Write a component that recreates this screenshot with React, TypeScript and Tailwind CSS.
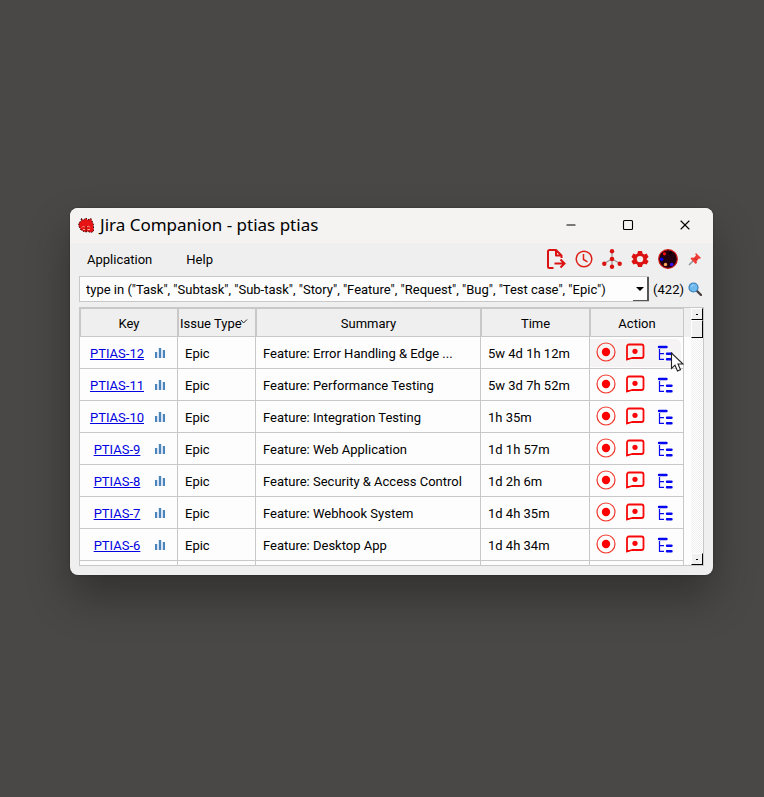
import { Minus, Square, X } from 'lucide-react';

const issues = [
  { key: 'PTIAS-12', type: 'Epic', summary: 'Feature: Error Handling & Edge ...', time: '5w 4d 1h 12m' },
  { key: 'PTIAS-11', type: 'Epic', summary: 'Feature: Performance Testing', time: '5w 3d 7h 52m' },
  { key: 'PTIAS-10', type: 'Epic', summary: 'Feature: Integration Testing', time: '1h 35m' },
  { key: 'PTIAS-9', type: 'Epic', summary: 'Feature: Web Application', time: '1d 1h 57m' },
  { key: 'PTIAS-8', type: 'Epic', summary: 'Feature: Security & Access Control', time: '1d 2h 6m' },
  { key: 'PTIAS-7', type: 'Epic', summary: 'Feature: Webhook System', time: '1d 4h 35m' },
  { key: 'PTIAS-6', type: 'Epic', summary: 'Feature: Desktop App', time: '1d 4h 34m' },
];

const query =
  'type in ("Task", "Subtask", "Sub-task", "Story", "Feature", "Request", "Bug", "Test case", "Epic")';

function BugLogo() {
  return (
    <svg viewBox="0 0 16 16" className="h-4 w-4">
      <path d="M3 1.500 5.500 3 8 1l1.500 2L13 1.500 14 4l1.500 3.500v4l.5 2.500-3 1.500-3-1-3 .5-4-2L.7 9 1 5.500 3.500 4z" fill="#e61414" />
      <path d="M3 1.500 5.500 3 8 1l1.500 2L13 1.500 14 4l1.500 3.500v4l.5 2.500-3 1.500-3-1-3 .5-4-2L.7 9 1 5.500 3.500 4z" fill="none" stroke="#2a0404" strokeWidth="1" strokeDasharray="1.500 1.500" />
      <path d="m4 10.500 1.500-1.500L7 10.500M9 10l1.500-1L12 10.500M5 12.500h2M9.500 12.500H12" fill="none" stroke="#ffa08c" strokeWidth="1" />
      <path d="M8 9v3.500M7 14l2-.5" fill="none" stroke="#7a0808" strokeWidth=".8" />
    </svg>
  );
}

function ExportIcon() {
  return (
    <svg viewBox="0 0 20 20" className="h-5 w-5" fill="none" stroke="#dc1212" strokeWidth="2" strokeLinejoin="round">
      <path d="M7.500 19H3.500A1.500 1.500 0 0 1 2 17.500v-15A1.500 1.500 0 0 1 3.500 1H10l5.500 5.500v2.500M10 1v5.500h5.500" />
      <path d="M8.500 14.500H18M14.500 10.500l4 4-4 4" strokeLinejoin="miter" />
    </svg>
  );
}

function ClockIcon() {
  return (
    <svg viewBox="0 0 20 20" className="h-5 w-5" fill="none" stroke="#dc2018" strokeWidth="1.500">
      <circle cx="10" cy="10" r="7.800" />
      <path d="M9.500 5v5.500l4 2.300" />
    </svg>
  );
}

function NodesIcon() {
  return (
    <svg viewBox="0 0 20 20" className="h-5 w-5">
      <path d="M10 2v16M10 10l-8 4.500M10 10l8 4.500" stroke="#999" strokeWidth="1.200" />
      <g fill="#dc1212">
        <circle cx="10" cy="2.200" r="2.200" />
        <circle cx="10" cy="10" r="2.300" />
        <circle cx="10" cy="17.800" r="2.200" />
        <circle cx="2.300" cy="14.700" r="2.200" />
        <circle cx="17.700" cy="14.700" r="2.200" />
      </g>
    </svg>
  );
}

function GearIcon() {
  return (
    <svg viewBox="0 0 20 20" className="h-5 w-5">
      <path
        fill="#dc1212"
        fillRule="evenodd"
        d="M8 2h4l.6 2.500 1.500.9L16.600 4.600l2 3.400-1.900 1.700v.9l1.900 1.600-2 3.400-2.500-.8-1.500.9L12 18H8l-.6-2.300-1.500-.9-2.500.8-2-3.400 1.900-1.600v-.9L1.400 8l2-3.400 2.500.8 1.500-.9zM10 6.900a3.200 3.200 0 1 0 0 6.400 3.200 3.200 0 0 0 0-6.400z"
      />
    </svg>
  );
}

function PaletteIcon() {
  return (
    <svg viewBox="0 0 20 20" className="h-5 w-5">
      <circle cx="10" cy="10" r="9.300" fill="#22000e" stroke="#d01818" strokeWidth="1.200" />
      <circle cx="6.500" cy="4.800" r="1.600" fill="#ff1010" />
      <circle cx="12.500" cy="4" r="1.500" fill="#000" />
      <circle cx="3.700" cy="10.200" r="1.700" fill="#0505ff" />
      <circle cx="7.500" cy="15.500" r="1.700" fill="#ffa45c" />
      <circle cx="13.700" cy="15.500" r="1.800" fill="#3510f0" />
    </svg>
  );
}

function PinIcon() {
  return (
    <svg viewBox="0 0 14 14" className="h-3.5 w-3.5">
      <path d="M5.500 8.500 1 13" stroke="#8a9298" strokeWidth="1.400" />
      <path d="m8 1 5 5-1 .8-1-.3-2.300 2.300.2 2.200-1.200 1L2.500 6.800l1.100-1.200 2.400.1L8 3.500 7.300 2z" fill="#f03a34" />
      <path d="m6.500 5.800 2.500 2.500" stroke="#b81c1c" strokeWidth=".9" />
    </svg>
  );
}

function SearchIcon() {
  return (
    <svg viewBox="0 0 14 14" className="h-3.5 w-3.5">
      <path d="m9 9 4 4" stroke="#4a4145" strokeWidth="2.400" strokeLinecap="round" />
      <circle cx="5.500" cy="5.500" r="4.500" fill="#70b9ee" stroke="#3a80b8" strokeWidth="1.200" />
      <path d="M3.500 4.500a2.500 2.500 0 0 1 2-1.500" stroke="#bfe2fb" fill="none" />
    </svg>
  );
}

function ChartIcon() {
  return (
    <svg viewBox="0 0 12 12" className="h-3 w-3" fill="#4a84bd">
      <path d="M1 5h3v6H1zM4 1h4v10H4zM8 3h3v8H8z" fillOpacity=".2" />
      <path d="M1 5h2v6H1zM5 1h2v10H5zM9 3h2v8H9z" />
    </svg>
  );
}

function RecordIcon() {
  return (
    <svg viewBox="0 0 20 20" className="h-5 w-5">
      <circle cx="10" cy="10" r="9" fill="none" stroke="#f0382c" strokeWidth="1.200" />
      <circle cx="10" cy="10" r="4.200" fill="#ff0000" />
    </svg>
  );
}

function CommentIcon() {
  return (
    <svg viewBox="0 0 20 20" className="h-5 w-5">
      <path d="M2 17.500V4.500a2 2 0 0 1 2-2h12.500a2 2 0 0 1 2 2v9.500a2 2 0 0 1-2 2H7z" fill="none" stroke="#f80808" strokeWidth="1.800" strokeLinejoin="round" />
      <path d="M1 18.500 7.500 16H2z" fill="#f80808" />
      <circle cx="10" cy="9.300" r="2.600" fill="#f80808" />
    </svg>
  );
}

function TreeIcon() {
  return (
    <svg viewBox="0 0 16 16" className="h-4 w-4" fill="none" stroke="#0808f0">
      <path d="M2 2h7.500M10 8.700h4.500M10 14.300h4.500" strokeWidth="2.400" strokeLinecap="round" />
      <path d="M2.500 4v11M2.500 8.700H7M2.500 14.300H7" strokeWidth="1.200" />
    </svg>
  );
}

const toolbar = [
  { label: 'Export', icon: ExportIcon },
  { label: 'History', icon: ClockIcon },
  { label: 'Hierarchy', icon: NodesIcon },
  { label: 'Settings', icon: GearIcon },
  { label: 'Theme', icon: PaletteIcon },
];

const columns = ['Key', 'Issue Type', 'Summary', 'Time', 'Action'];

const raised = 'border border-t-white border-l-white border-r-black border-b-black bg-[#f0f0f0]';

function TitleBar() {
  return (
    <header className="flex h-[35px] items-center bg-[#f4f3f2] pb-0.5 pl-2">
      <BugLogo />
      <h1 className="ml-1.5 flex-1 font-['Noto_Sans',sans-serif] text-[17px] leading-6">
        Jira Companion - ptias ptias
      </h1>
      <button aria-label="Minimize" className="flex h-full w-[57px] items-center justify-center">
        <Minus className="h-3.5 w-3.5" strokeWidth={1.8} />
      </button>
      <button aria-label="Maximize" className="flex h-full w-[57px] items-center justify-center">
        <Square className="h-3 w-3" strokeWidth={2.2} />
      </button>
      <button aria-label="Close" className="flex h-full w-[57px] items-center justify-center">
        <X className="h-4 w-4" strokeWidth={1.6} />
      </button>
    </header>
  );
}

function MenuBar() {
  return (
    <div className="flex h-[33px] items-center pr-[11px] pb-0.5 pl-[17px]">
      <nav className="flex flex-1 gap-[34px] pt-0.5">
        <button>Application</button>
        <button>Help</button>
      </nav>
      <div className="flex items-center gap-2">
        {toolbar.map(({ label, icon: Icon }) => (
          <button key={label} aria-label={label}>
            <Icon />
          </button>
        ))}
        <button aria-label="Pin" className="ml-0.5">
          <PinIcon />
        </button>
      </div>
    </div>
  );
}

function QueryBar() {
  return (
    <div className="flex items-center pr-[11px] pl-[9px]">
      <div className="flex h-[26px] min-w-0 flex-1 border border-r-0 border-[#c8c8c8] bg-[#fdfdfd]">
        <input
          aria-label="Query"
          defaultValue={query}
          className="min-w-0 flex-1 bg-transparent pt-0.5 pl-1.5 outline-none"
        />
        <button
          aria-label="Saved queries"
          className="flex w-4 items-center justify-center border-r-2 border-b border-[#555]"
        >
          <svg viewBox="0 0 8 4" className="h-1 w-2 shrink-0">
            <path d="M0 0h8L4 4z" fill="#000" />
          </svg>
        </button>
      </div>
      <span className="ml-1 pt-0.5">(422)</span>
      <button aria-label="Search" className="ml-1">
        <SearchIcon />
      </button>
    </div>
  );
}

function IssueTable() {
  return (
    <table className="w-full table-fixed border-separate border-spacing-0">
      <colgroup>
        <col className="w-[98px]" />
        <col className="w-[78px]" />
        <col />
        <col className="w-[109px]" />
        <col className="w-[94px]" />
      </colgroup>
      <thead>
        <tr className="h-[29px] bg-[#efefef]">
          {columns.map((name) => (
            <th key={name} scope="col" className="border border-[#c8c8c8] p-0 pt-0.5 font-normal">
              {name === 'Issue Type' ? (
                <span className="flex pl-px">
                  {name}
                  <svg viewBox="0 0 8 5" className="-ml-0.5 mt-1 h-[5px] w-2 shrink-0" fill="none" stroke="#222">
                    <path d="M1 1l2.500 3L7 .5" />
                  </svg>
                </span>
              ) : (
                name
              )}
            </th>
          ))}
        </tr>
      </thead>
      <tbody>
        {issues.map((issue, index) => (
          <tr key={issue.key} className="h-8 *:border-r *:border-b *:border-[#c8c8c8] *:p-0">
            <td>
              <div className="flex items-center pr-[11px]">
                <span className="flex-1 pt-0.5 text-center">
                  <a href={`#${issue.key}`} className="text-[#0000e0] underline">
                    {issue.key}
                  </a>
                </span>
                <button aria-label={`${issue.key} statistics`}>
                  <ChartIcon />
                </button>
              </div>
            </td>
            <td>
              <div className="pt-0.5 pl-[7px]">{issue.type}</div>
            </td>
            <td>
              <div className="truncate pt-0.5 pl-[7px]">{issue.summary}</div>
            </td>
            <td>
              <div className="pt-0.5 pl-[7px]">{issue.time}</div>
            </td>
            <td>
              <div
                className={`mr-0.5 flex h-7 items-center rounded-r-md pb-0.5 pl-1.5 ${index === 0 ? 'bg-[#f5f3f3]' : ''}`}
              >
                <button aria-label={`Track ${issue.key}`}>
                  <RecordIcon />
                </button>
                <button aria-label={`Comment on ${issue.key}`} className="ml-[9px]">
                  <CommentIcon />
                </button>
                <button aria-label={`Subtasks of ${issue.key}`} className="mt-0.5 ml-3">
                  <TreeIcon />
                </button>
              </div>
            </td>
          </tr>
        ))}
        <tr className="h-8 *:border-r *:border-[#c8c8c8]">
          {columns.map((name) => (
            <td key={name} />
          ))}
        </tr>
      </tbody>
    </table>
  );
}

function ScrollBar() {
  return (
    <div className="flex w-3 flex-col bg-[repeating-conic-gradient(#efefef_0_25%,#fff_0_50%)] bg-size-[2px_2px]">
      <button aria-label="Scroll up" className={`flex h-3 items-center justify-center ${raised}`}>
        <span className="h-px w-0.5 bg-black" />
      </button>
      <div className={`h-[18px] ${raised}`} />
      <button aria-label="Scroll down" className={`mt-auto flex h-3 items-center justify-center ${raised}`}>
        <span className="h-px w-0.5 bg-black" />
      </button>
    </div>
  );
}

function Pointer() {
  return (
    <svg viewBox="0 0 14 20" className="pointer-events-none absolute top-[144px] right-[29px] h-5 w-3.5">
      <path d="M1.500 1v15.500l3.500-3.300 2.500 5.800 3-1.300L8 12h5z" fill="#fff" stroke="#222" strokeWidth="1.100" />
    </svg>
  );
}

export default function App() {
  return (
    <main className="min-h-screen bg-[#4a4846] pt-52 pr-[51px] pb-10 pl-[70px] font-[Roboto,sans-serif] text-[13px] leading-[18px] text-black">
      <div className="relative rounded-lg shadow-[0_22px_44px_rgba(0,0,0,0.32),0_0_2px_rgba(0,0,0,0.4)]">
        <div className="overflow-hidden rounded-lg bg-[#efefef]">
          <TitleBar />
          <MenuBar />
          <QueryBar />
          <div className="mx-[9px] mt-[5px] mb-[9px] flex max-h-[259px] overflow-hidden border border-[#c8c8c8] bg-[#fdfdfd]">
            <div className="min-w-0 flex-1">
              <IssueTable />
            </div>
            <div className="w-[7px]">
              <div className="h-[29px] bg-[#efefef]" />
            </div>
            <ScrollBar />
          </div>
        </div>
        <Pointer />
      </div>
    </main>
  );
}
